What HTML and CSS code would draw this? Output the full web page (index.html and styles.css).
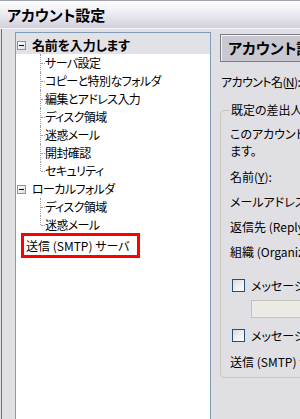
FILE: index.html
```html
<!DOCTYPE html>
<html lang="ja">
<head>
    <meta charset="UTF-8">
    <title>アカウント設定</title>
    <link rel="stylesheet" href="styles.css">
</head>
<body>
    <div class="titlebar">アカウント設定</div>

    <div class="window">
        <div class="tree">
            <div class="node root selected"><span class="twisty"></span>名前を入力します</div>
            <ul class="children">
                <li>サーバ設定</li>
                <li>コピーと特別なフォルダ</li>
                <li>編集とアドレス入力</li>
                <li>ディスク領域</li>
                <li>迷惑メール</li>
                <li>開封確認</li>
                <li>セキュリティ</li>
            </ul>
            <div class="node root"><span class="twisty"></span><span class="plain">ローカルフォルダ</span></div>
            <ul class="children">
                <li>ディスク領域</li>
                <li>迷惑メール</li>
            </ul>
            <div class="node"><span class="mark">送信 (SMTP) サーバ</span></div>
        </div>

        <div class="panel">
            <div class="panel-head">アカウント設定</div>
            <div class="line account">アカウント名(<u>N</u>):</div>

            <fieldset class="group">
                <legend>既定の差出人情報</legend>
                <div class="desc">このアカウントで使用する既定の差出人情報を設定し<br>ます。</div>
                <div class="row">名前(<u>Y</u>):</div>
                <div class="row">メールアドレス(<u>E</u>):</div>
                <div class="row">返信先 (Reply-to):</div>
                <div class="row">組織 (Organization):</div>
                <div class="row check first"><span class="box"></span>メッセージに署名を添付する</div>
                <div class="textbox"></div>
                <div class="row check second"><span class="box"></span>メッセージに vCard を添付する</div>
                <div class="row smtp">送信 (SMTP) サーバ(<u>U</u>):</div>
            </fieldset>
        </div>
    </div>
</body>
</html>
```

FILE: styles.css
```css
* {
    margin: 0;
    padding: 0;
    box-sizing: border-box;
}

body {
    font-family: "Noto Sans CJK JP", "Noto Sans", sans-serif;
    font-size: 12px;
    font-feature-settings: "palt";
    color: #000;
    background: #e0dfe3;
    width: 300px;
    height: 419px;
    overflow: hidden;
}

.titlebar {
    height: 29px;
    border-top: 1px solid #a2a2b0;
    border-bottom: 1px solid #f4f4f8;
    background: linear-gradient(#ffffff 0%, #eeeef3 40%, #d2d1dc 100%);
    padding-left: 7px;
    font-size: 15px;
    font-weight: bold;
    line-height: 27px;
    white-space: nowrap;
}

.window {
    display: flex;
    height: 390px;
    margin-left: 1px;
    border-left: 1px solid #6d6d87;
    padding: 3px 0 0 13px;
}

/* tree */
.tree {
    flex: none;
    width: 196px;
    background: #fff;
    border: 1px solid #7f9db9;
    border-bottom: none;
    line-height: 18px;
    letter-spacing: -0.6px;
}

.node {
    display: flex;
    align-items: center;
    height: 18px;
    padding-left: 1px;
    gap: 6px;
    white-space: nowrap;
}

.node.selected {
    height: 21px;
    padding-top: 3px;
    background: #e2e1e6;
    font-weight: bold;
    font-size: 13px;
    letter-spacing: -0.2px;
}

.twisty {
    position: relative;
    width: 9px;
    height: 9px;
    border: 1px solid #8c8cc0;
    background: linear-gradient(135deg, #ffffff, #dcdce6);
}

.twisty::after {
    content: "";
    position: absolute;
    left: 1px;
    top: 3px;
    width: 5px;
    height: 1px;
    background: #000;
}

.children {
    list-style: none;
}

.children li {
    position: relative;
    height: 18px;
    padding-left: 29px;
    white-space: nowrap;
}

.children li::before {
    content: "";
    position: absolute;
    left: 24px;
    top: 0;
    bottom: 0;
    border-left: 1px dotted #a0a0a0;
}

.children li:last-child::before {
    bottom: 9px;
}

.children li::after {
    content: "";
    position: absolute;
    left: 25px;
    top: 9px;
    width: 4px;
    border-top: 1px dotted #a0a0a0;
}

.mark {
    display: inline-block;
    width: 119px;
    height: 25px;
    margin: 5px 0 0 4px;
    border: 3px solid #ff0000;
    padding-left: 2px;
    line-height: 19px;
    letter-spacing: 0;
}

/* right panel */
.panel {
    flex: none;
    width: 230px;
    margin-left: 9px;
    padding-top: 2px;
    white-space: nowrap;
}

.panel-head {
    height: 28px;
    border: 1px solid #7c7c84;
    box-shadow: inset 1px 1px #f2f2f4;
    background: #c9c8d0;
    padding-left: 7px;
    font-size: 15px;
    font-weight: bold;
    line-height: 26px;
}

.line {
    line-height: 18px;
}

.account {
    margin-top: 11px;
    padding-left: 1px;
    letter-spacing: -0.6px;
}

.group {
    margin-top: 10px;
    border: 1px solid #c9c8bd;
    border-radius: 4px;
    padding: 0 0 3px 9px;
    height: 277px;
}

.group legend {
    line-height: 18px;
    padding: 0 1px;
}

.desc {
    margin-top: 6px;
    line-height: 17px;
}

.row {
    height: 25px;
    line-height: 25px;
    display: flex;
    align-items: center;
}

.desc + .row {
    margin-top: 5px;
}

.check {
    height: 24px;
    gap: 6px;
}

.check.first {
    margin-top: 9px;
}

.check.second {
    margin-top: 5px;
}

.box {
    width: 13px;
    height: 13px;
    margin-left: 2px;
    border: 1px solid #1c5180;
    background: linear-gradient(135deg, #dcdcd7, #ffffff);
}

.textbox {
    height: 18px;
    margin: 3px 0 0 21px;
    border: 1px solid #c3c3bd;
    background: #ebeae5;
}

.smtp {
    margin-top: 2px;
}
```
